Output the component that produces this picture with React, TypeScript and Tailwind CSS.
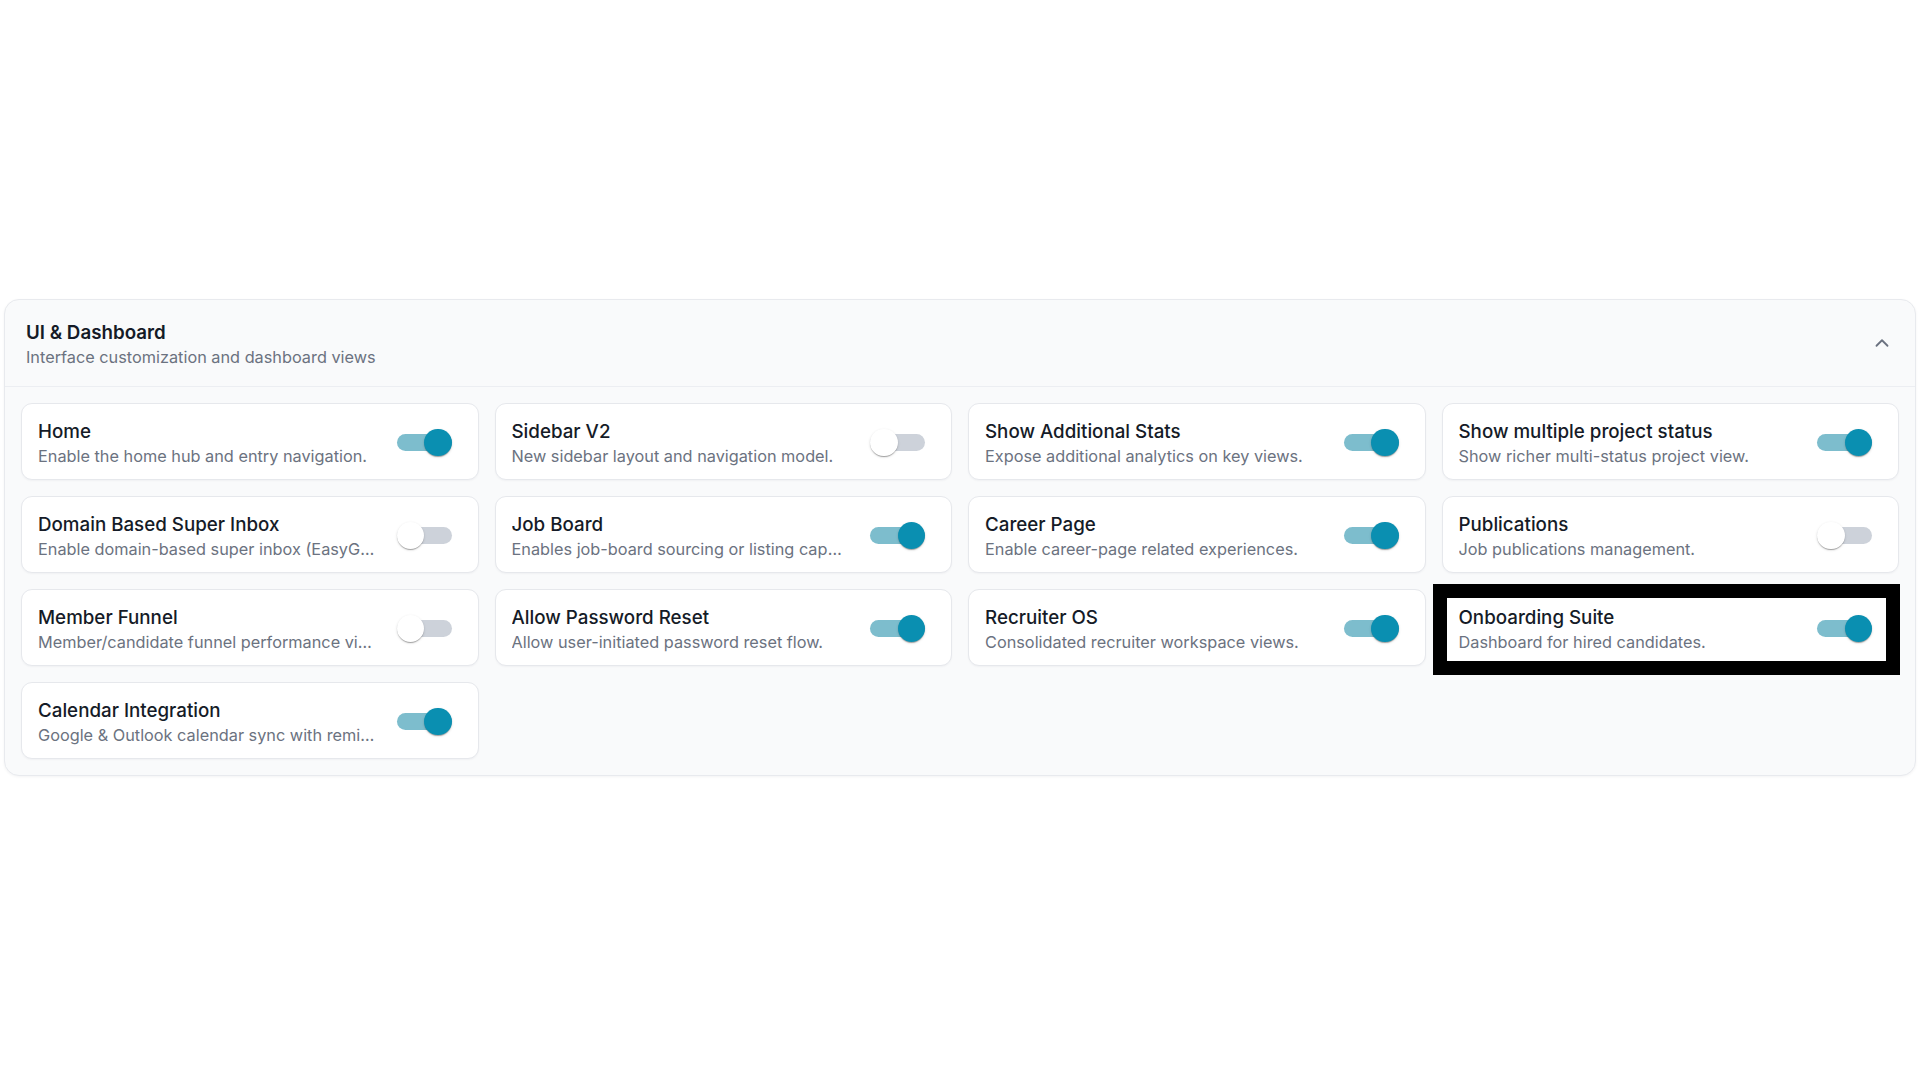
import React from "react";

type Flag = { title: string; desc: string; on: boolean; marked?: boolean };

const flags: Flag[] = [
  { title: "Home", desc: "Enable the home hub and entry navigation.", on: true },
  { title: "Sidebar V2", desc: "New sidebar layout and navigation model.", on: false },
  { title: "Show Additional Stats", desc: "Expose additional analytics on key views.", on: true },
  { title: "Show multiple project status", desc: "Show richer multi-status project view.", on: true },
  { title: "Domain Based Super Inbox", desc: "Enable domain-based super inbox (EasyGo integration).", on: false },
  { title: "Job Board", desc: "Enables job-board sourcing or listing capabilities.", on: true },
  { title: "Career Page", desc: "Enable career-page related experiences.", on: true },
  { title: "Publications", desc: "Job publications management.", on: false },
  { title: "Member Funnel", desc: "Member/candidate funnel performance views.", on: false },
  { title: "Allow Password Reset", desc: "Allow user-initiated password reset flow.", on: true },
  { title: "Recruiter OS", desc: "Consolidated recruiter workspace views.", on: true },
  { title: "Onboarding Suite", desc: "Dashboard for hired candidates.", on: true, marked: true },
  { title: "Calendar Integration", desc: "Google & Outlook calendar sync with reminders.", on: true },
];

function Switch({ on }: { on: boolean }) {
  return (
    <div className="relative h-[28px] w-[55px] shrink-0">
      <div
        className={
          on
            ? "absolute left-0 right-0 top-[5.5px] h-[17px] rounded-full bg-[#7dbdcd]"
            : "absolute left-0 right-0 top-[5.5px] h-[17px] rounded-full bg-[#cdd2da]"
        }
      />
      <div
        className={
          on
            ? "absolute right-0 top-0 h-[27.5px] w-[27.5px] rounded-full bg-[#0a8fb1] shadow-[0_2px_1px_-1px_rgba(0,0,0,0.2),0_1px_1px_0_rgba(0,0,0,0.14),0_1px_3px_0_rgba(0,0,0,0.12)]"
            : "absolute left-0 top-0 h-[27.5px] w-[27.5px] rounded-full bg-white shadow-[0_2px_1px_-1px_rgba(0,0,0,0.2),0_1px_1px_0_rgba(0,0,0,0.14),0_1px_3px_0_rgba(0,0,0,0.12)]"
        }
      />
    </div>
  );
}

function FlagCard({ f }: { f: Flag }) {
  return (
    <div className="relative flex items-center gap-[22px] rounded-[11px] border border-[#e6e8ec] bg-white pb-[12px] pl-[16px] pr-[26px] pt-[14px] shadow-[0_1px_2px_rgba(16,24,40,0.04)]">
      <div className="min-w-0 flex-1">
        <div className="truncate text-[18.75px] font-medium leading-[28px] text-[#151b27]">{f.title}</div>
        <div className="truncate text-[16.3px] leading-[21px] text-[#6b7280]">{f.desc}</div>
      </div>
      <Switch on={f.on} />
      {f.marked && (
        <div className="pointer-events-none absolute -left-[10px] -top-[6px] z-10 h-[91px] w-[467px] border-[14px] border-black" />
      )}
    </div>
  );
}

export default function App() {
  return (
    <div className="min-h-screen bg-white px-1 pt-[299px] font-[Inter,sans-serif]">
      <section className="overflow-hidden rounded-[15px] border border-[#e8eaee] bg-[#f9fafb] shadow-[0_1px_3px_rgba(16,24,40,0.05)]">
        <header className="flex items-center justify-between border-b border-[#eceef2] pb-[19px] pl-[21px] pr-[22px] pt-[19px]">
          <div>
            <h2 className="text-[18.75px] font-semibold leading-[28px] text-[#151b27]">UI &amp; Dashboard</h2>
            <p className="text-[16.3px] leading-[20px] text-[#6b7280]">Interface customization and dashboard views</p>
          </div>
          <svg
            width="22"
            height="22"
            viewBox="0 0 24 24"
            fill="none"
            stroke="#6b7280"
            strokeWidth="2"
            strokeLinecap="round"
            strokeLinejoin="round"
          >
            <path d="m18 15-6-6-6 6" />
          </svg>
        </header>
        <div className="grid grid-cols-4 gap-4 p-4">
          {flags.map((f) => (
            <FlagCard key={f.title} f={f} />
          ))}
        </div>
      </section>
    </div>
  );
}
